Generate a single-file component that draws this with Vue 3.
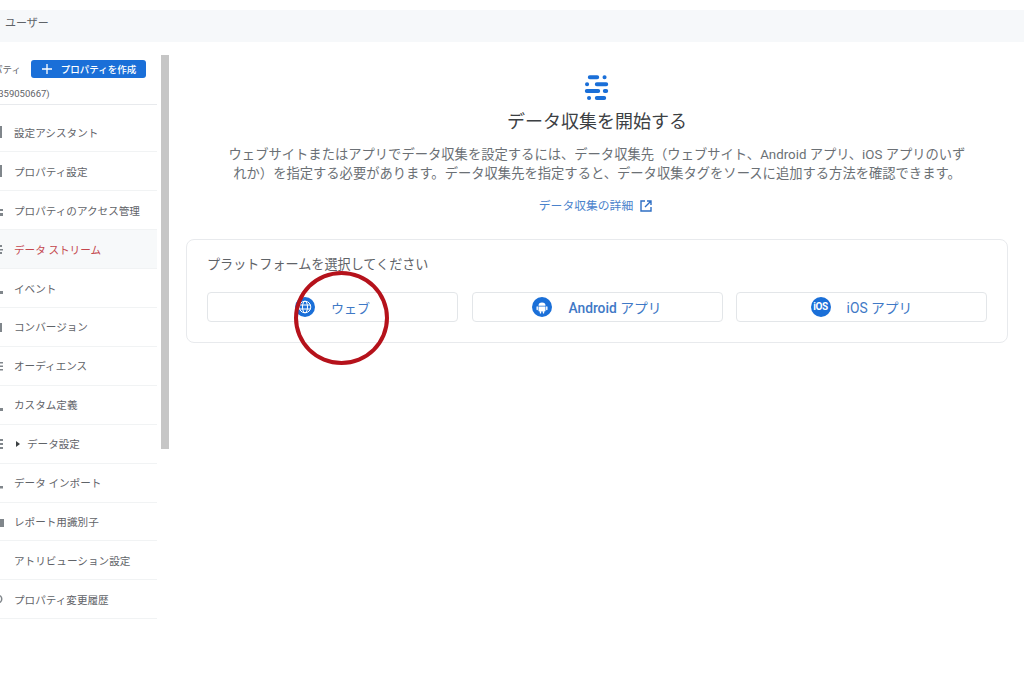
<script setup>
const navItems = [
  { label: '設定アシスタント', icon: 'M-3 1h5v12h-5z' },
  { label: 'プロパティ設定', icon: 'M-3 1h5v12h-5z' },
  { label: 'プロパティのアクセス管理', icon: 'M-3 6h6v2h-6zM-3 10h6v3h-6z' },
  { label: 'データ ストリーム', icon: 'M0 3h2v2h-2zM0 7h3v1.500h-3zM0 10h2v2h-2z', active: true },
  { label: 'イベント', icon: 'M0 10h3v3h-3z' },
  { label: 'コンバージョン', icon: 'M0 3h2v9h-2z' },
  { label: 'オーディエンス', icon: 'M0 3h3v1.500h-3zM0 6.500h3v1.500h-3zM0 10h3v1.500h-3z' },
  { label: 'カスタム定義', icon: 'M0 10h3v3h-3z' },
  { label: 'データ設定', icon: 'M0 2h3v2h-3zM0 6h3v2h-3zM0 10h3v2h-3z', expand: true },
  { label: 'データ インポート', icon: 'M0 10h3v2.500h-3z' },
  { label: 'レポート用識別子', icon: 'M-1 4h5v8h-5z' },
  { label: 'アトリビューション設定', icon: '' },
  { label: 'プロパティ変更履歴', icon: 'M-2 2.500a4.500 4.500 0 0 1 0 9l0-1.500a3 3 0 0 0 0-6z' }
]
</script>

<template>
  <div class="page">
    <div class="topbar"><span class="topbar-title">ユーザー</span></div>
    <div class="body">
      <aside class="sidebar">
        <div class="head">
          <div class="head-row">
            <span class="clipped">パティ</span>
            <button class="create">
              <svg width="12" height="12" viewBox="0 0 12 12"><path d="M6 1v10M1 6h10" stroke="#fff" stroke-width="1.300" fill="none" /></svg>
              <span>プロパティを作成</span>
            </button>
          </div>
          <div class="prop-id">(359050667)</div>
        </div>
        <ul class="nav">
          <li v-for="item in navItems" :key="item.label" class="nav-row" :class="{ active: item.active }">
            <svg class="nav-icon" width="14" height="14" viewBox="0 0 14 14"><path :d="item.icon" fill="#80868b" /></svg>
            <span v-if="item.expand" class="caret"></span>
            <span>{{ item.label }}</span>
          </li>
        </ul>
      </aside>
      <div class="scrollbar"></div>
      <main class="main">
        <svg class="stream-icon" width="26" height="26" viewBox="0 0 26 26" fill="none" stroke="#1a6fd8" stroke-width="4" stroke-linecap="round">
          <path d="M5.800 2.300h7.400M20.500 2.300h.1M3 9.300h.1M12.800 9.300h9.400M2.800 16h11.400M20.800 16h1.400M5 23h.1M12.800 23h7.400" />
        </svg>
        <h1 class="title">データ収集を開始する</h1>
        <p class="desc">
          <span>ウェブサイトまたはアプリでデータ収集を設定するには、データ収集先（ウェブサイト、Android アプリ、iOS アプリのいず</span>
          <span>れか）を指定する必要があります。データ収集先を指定すると、データ収集タグをソースに追加する方法を確認できます。</span>
        </p>
        <a class="link">
          <span>データ収集の詳細</span>
          <svg width="14" height="14" viewBox="0 0 14 14" fill="none" stroke="#2f6fc4" stroke-width="1.400"><path d="M6 2H2v10h10V8M8 2h4v4M12 2L6 8" /></svg>
        </a>
        <section class="card">
          <div class="card-title">プラットフォームを選択してください</div>
          <div class="platforms">
            <button class="platform">
              <svg width="20" height="20" viewBox="0 0 20 20">
                <circle cx="10" cy="10" r="10" fill="#1a6fd8" />
                <g fill="none" stroke="#fff" stroke-width="1">
                  <circle cx="10" cy="10" r="5.800" />
                  <ellipse cx="10" cy="10" rx="2.500" ry="5.800" />
                  <path d="M4.500 8h11M4.500 12h11" />
                </g>
              </svg>
              <span>ウェブ</span>
            </button>
            <button class="platform wide">
              <svg width="20" height="20" viewBox="0 0 20 20">
                <circle cx="10" cy="10" r="10" fill="#1a6fd8" />
                <g fill="#fff">
                  <path d="M6.500 8.700a3.500 3.300 0 0 1 7 0z" />
                  <path d="M6.500 9.400h7v4.400a.8.8 0 0 1-.8.8H7.300a.8.8 0 0 1-.8-.8z" />
                  <rect x="4.500" y="9.300" width="1.400" height="4" rx=".7" />
                  <rect x="14.100" y="9.300" width="1.400" height="4" rx=".7" />
                  <rect x="7.800" y="14" width="1.400" height="2.600" rx=".7" />
                  <rect x="10.800" y="14" width="1.400" height="2.600" rx=".7" />
                </g>
              </svg>
              <span><span class="latin">Android</span> アプリ</span>
            </button>
            <button class="platform wide">
              <span class="ios-badge">iOS</span>
              <span>iOS アプリ</span>
            </button>
          </div>
        </section>
      </main>
    </div>
    <div class="marker"></div>
  </div>
</template>

<style>
html, body { margin: 0; background: #fff; }
</style>

<style scoped>
.page {
  position: relative;
  height: 683px;
  overflow: hidden;
  padding-top: 10px;
  box-sizing: border-box;
  font-family: Roboto, "Noto Sans CJK JP", sans-serif;
  color: #5f6368;
}
.topbar {
  height: 32px;
  box-sizing: border-box;
  background: #f6f8fa;
  display: flex;
  align-items: center;
  padding: 0 0 8px 5px;
  margin-bottom: 13px;
}
.topbar-title { font-size: 11px; color: #5f6368; }
.body { display: flex; align-items: flex-start; }
.sidebar { width: 157px; flex: none; overflow: hidden; }
.head { height: 49px; border-bottom: 1px solid #e8eaed; margin-bottom: 8.500px; }
.head-row { display: flex; align-items: center; height: 18px; position: relative; padding-left: 31px; padding-top: 5px; }
.clipped { position: absolute; left: -7px; font-size: 9.500px; white-space: nowrap; }
.create {
  width: 115px;
  height: 18px;
  border: 0;
  border-radius: 3px;
  background: #1a6fd8;
  color: #fff;
  font: 500 9.500px Roboto, "Noto Sans CJK JP", sans-serif;
  display: flex;
  align-items: center;
  justify-content: center;
  gap: 8px;
  padding: 0;
}
.prop-id { font-size: 9.500px; margin-left: -5px; margin-top: 9px; line-height: 14px; color: #5f6368; }
.nav { list-style: none; margin: 0; padding: 0; }
.nav-row {
  height: 38.920px;
  box-sizing: border-box;
  border-bottom: 1px solid #f1f3f4;
  display: flex;
  align-items: center;
  font-size: 10.600px;
  white-space: nowrap;
  color: #5f6368;
}
.nav-row.active { background: #f7f9fa; color: #c4474d; }
.nav-icon { flex: none; }
.caret {
  width: 0;
  height: 0;
  border-left: 4px solid #3c4043;
  border-top: 3.500px solid transparent;
  border-bottom: 3.500px solid transparent;
  margin: 0 7px 0 2px;
}
.scrollbar { width: 8px; height: 394px; background: #c6c6c6; margin: 0 17px 0 4px; flex: none; }
.main { width: 822px; flex: none; display: flex; flex-direction: column; align-items: center; }
.stream-icon { margin-top: 20px; }
.title { margin: 8px 0 0; font-size: 18px; line-height: 26px; font-weight: 400; color: #3c4043; }
.desc { margin: 10px 0 0; font-size: 13.300px; line-height: 19px; text-align: center; color: #6b7075; white-space: nowrap; }
.desc span { display: block; }
.link {
  margin: 14px 2px 0 0;
  display: flex;
  align-items: center;
  gap: 6px;
  font-size: 11.800px;
  line-height: 18px;
  color: #4a82cc;
}
.card {
  align-self: stretch;
  margin-top: 24px;
  height: 104px;
  box-sizing: border-box;
  border: 1px solid #e8eaed;
  border-radius: 8px;
  padding: 15px 20px 0;
}
.card-title { font-size: 13.100px; line-height: 20px; color: #5f6368; margin-bottom: 17px; }
.platforms { display: grid; grid-template-columns: repeat(3, 1fr); gap: 13.500px; }
.platform {
  height: 30px;
  background: #fff;
  border: 1px solid #e3e6e9;
  border-radius: 4px;
  display: flex;
  align-items: center;
  justify-content: center;
  gap: 16px;
  padding: 0;
  font: 400 13px Roboto, "Noto Sans CJK JP", sans-serif;
  color: #3f79c6;
}
.platform.wide { font-size: 13.800px; }
.latin { font-weight: 500; }
.ios-badge {
  width: 20px;
  height: 20px;
  border-radius: 50%;
  background: #1a6fd8;
  color: #fff;
  font-size: 10px;
  font-weight: 700;
  letter-spacing: -0.4px;
  line-height: 20px;
  text-align: center;
}
.marker {
  position: absolute;
  left: 294px;
  top: 271px;
  width: 95px;
  height: 94px;
  box-sizing: border-box;
  border: 4px solid #b5121b;
  border-radius: 50%;
}
</style>
